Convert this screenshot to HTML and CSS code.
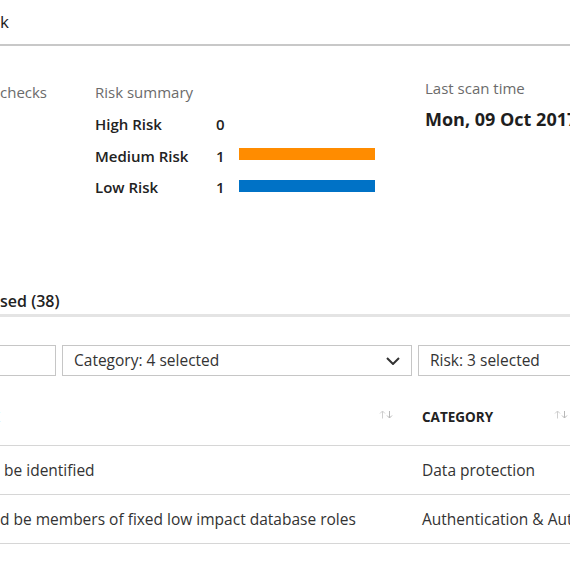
FILE: index.html
```html
<!DOCTYPE html>
<html lang="en">
<head>
<meta charset="utf-8">
<title>Vulnerability Assessment</title>
<link rel="stylesheet" href="styles.css">
</head>
<body>
<div class="page">
  <header class="blade-head">
    <h1 class="title"><span class="cut">Vulnerability Assessment - Scan Ris</span>k</h1>
  </header>

  <section class="summary">
    <div class="col col-checks">
      <div class="label"><span class="cut">Failed </span>checks</div>
    </div>
    <div class="col col-risk">
      <div class="label">Risk summary</div>
      <div class="risk-grid">
        <span class="risk-name">High Risk</span><span class="risk-count">0</span><span class="bar-cell"></span>
        <span class="risk-name">Medium Risk</span><span class="risk-count">1</span><span class="bar bar-medium"></span>
        <span class="risk-name">Low Risk</span><span class="risk-count">1</span><span class="bar bar-low"></span>
      </div>
    </div>
    <div class="col col-scan">
      <div class="label">Last scan time</div>
      <div class="scan-time">Mon, 09 Oct 2017 10:24:51 GMT</div>
    </div>
  </section>

  <section class="tabs">
    <div class="tab"><span class="cut">Pas</span>sed (38)</div>
  </section>

  <div class="filters">
    <div class="box box-search"></div>
    <div class="box box-select">
      <span>Category: 4 selected</span>
      <svg class="chevron" width="14" height="8" viewBox="0 0 14 8"><polyline points="1,1 7,7 13,1" fill="none" stroke="#333" stroke-width="2"/></svg>
    </div>
    <div class="box box-select box-risk">
      <span>Risk: 3 selected</span>
    </div>
  </div>

  <div class="table">
    <div class="th th-name">
      <span class="cut">SECURITY CHECK</span>
      <svg class="sort" width="14" height="9" viewBox="0 0 14 9"><path d="M3.5 8.5V1M1 3.5L3.5 1L6 3.5" fill="none" stroke="#cfcfcf" stroke-width="1"/><path d="M10.5 1V8M8 5.5L10.5 8L13 5.5" fill="none" stroke="#b8b8b8" stroke-width="1"/></svg>
    </div>
    <div class="th th-cat">
      <span>CATEGORY</span>
      <svg class="sort" width="14" height="9" viewBox="0 0 14 9"><path d="M3.5 8.5V1M1 3.5L3.5 1L6 3.5" fill="none" stroke="#cfcfcf" stroke-width="1"/><path d="M10.5 1V8M8 5.5L10.5 8L13 5.5" fill="none" stroke="#b8b8b8" stroke-width="1"/></svg>
    </div>
    <div class="th th-risk">RISK</div>

    <div class="td td-name"><span class="cut">Sensitive data should</span> be identified</div>
    <div class="td td-cat">Data protection</div>
    <div class="td td-risk">Low</div>

    <div class="td td-name"><span class="cut">Database principals shoul</span>d be members of fixed low impact database roles</div>
    <div class="td td-cat">Authentication &amp; Authorization</div>
    <div class="td td-risk">Medium</div>
  </div>
</div>
</body>
</html>
```
FILE: styles.css
```css
html, body {
  margin: 0;
  overflow: hidden;
}
body {
  width: 570px;
  height: 570px;
  background: #fff;
  font-family: "Open Sans", "Noto Sans", sans-serif;
  font-size: 15px;
  line-height: 20px;
  color: #2b2b2b;
}
.page {
  width: 570px;
}
.cut {
  display: inline-flex;
  justify-content: flex-end;
  width: 0;
  white-space: pre;
}

/* header */
.blade-head {
  padding: 10px 0;
  border-bottom: 2px solid #c8c8c8;
}
.title {
  margin: 0;
  font-size: 17px;
  font-weight: 400;
  line-height: 24px;
  white-space: nowrap;
  color: #222;
}

/* summary */
.summary {
  display: flex;
  white-space: nowrap;
}
.label {
  color: #6b6b6b;
}
.col-checks {
  flex: 0 0 95px;
  padding-top: 36px;
}
.col-risk {
  flex: 0 0 330px;
  padding-top: 36px;
}
.col-scan {
  flex: 1 0 auto;
  padding-top: 31.5px;
}
.risk-grid {
  display: grid;
  grid-template-columns: 121px 23px 136px;
  grid-auto-rows: 31.5px;
  align-items: center;
  margin-top: 6.5px;
  font-weight: 600;
  color: #222;
}
.bar {
  height: 12px;
  margin-bottom: 3px;
}
.bar-medium { background: #ff8c00; }
.bar-low { background: #0072c6; }
.scan-time {
  margin-top: 9.5px;
  font-size: 18px;
  line-height: 24px;
  font-weight: 700;
  color: #1e1e1e;
}

/* tabs */
.tabs {
  margin-top: 87px;
  padding-bottom: 2px;
  border-bottom: 3px solid #e4e4e4;
}
.tab {
  font-size: 16px;
  line-height: 22px;
  font-weight: 600;
  color: #222;
  white-space: nowrap;
}

/* filters */
.filters {
  display: flex;
  gap: 6px;
  margin: 28px 0 0 -200px;
}
.box {
  box-sizing: border-box;
  height: 31px;
  border: 1px solid #c6c6c6;
  padding: 0 11px;
  font-size: 15.5px;
  line-height: 29px;
  color: #333;
  white-space: nowrap;
  display: flex;
  align-items: center;
  justify-content: space-between;
}
.box-search { flex: 0 0 256px; }
.box-select { flex: 0 0 350px; }
.box-risk { flex: 0 0 300px; }

/* table */
.table {
  display: grid;
  grid-template-columns: 417px 260px 200px;
}
.th {
  display: flex;
  align-items: flex-start;
  justify-content: space-between;
  padding: 32px 0 19px;
  font-size: 13.5px;
  line-height: 18px;
  font-weight: 700;
  color: #222;
  border-bottom: 1px solid #d6d6d6;
  white-space: nowrap;
}
.th-name { padding-right: 24px; }
.th-cat { padding-left: 5px; padding-right: 109px; }
.th-risk { padding-left: 5px; }
.sort {
  margin-top: 1.5px;
  flex: none;
}
.td {
  padding: 14px 0;
  border-bottom: 1px solid #d6d6d6;
  font-size: 15.5px;
  white-space: nowrap;
  color: #333;
}
.td-cat {
  padding-left: 5px;
  overflow: hidden;
}
.td-risk { padding-left: 5px; }
```
